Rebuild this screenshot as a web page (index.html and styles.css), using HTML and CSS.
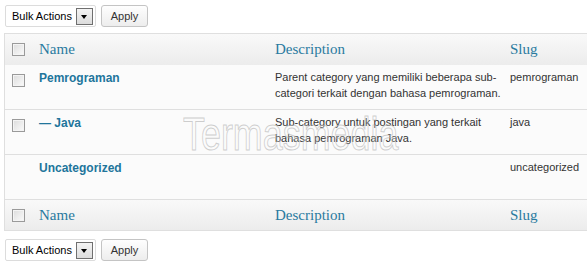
FILE: index.html
```html
<!DOCTYPE html>
<html lang="id">
<head>
  <meta charset="UTF-8" />
  <title>Categories</title>
  <link rel="stylesheet" href="styles.css">
</head>
<body>
  <div class="wrap">

    <div class="tablenav">
      <div class="bulk-select">
        <span>Bulk Actions</span>
        <span class="drop"></span>
      </div>
      <button class="button">Apply</button>
    </div>

    <table class="widefat">
      <colgroup>
        <col class="c-check">
        <col class="c-name">
        <col class="c-desc">
        <col class="c-slug">
      </colgroup>
      <thead>
        <tr>
          <th class="check-column"><span class="cb"></span></th>
          <th>Name</th>
          <th>Description</th>
          <th>Slug</th>
        </tr>
      </thead>
      <tbody>
        <tr>
          <th class="check-column"><span class="cb"></span></th>
          <td>
            <a class="row-title" href="#">Pemrograman</a>
            <div class="row-actions">Edit | Quick Edit | Delete | View</div>
          </td>
          <td class="col-desc">Parent category yang memiliki beberapa sub-categori terkait dengan bahasa pemrograman.</td>
          <td>pemrograman</td>
        </tr>
        <tr>
          <th class="check-column"><span class="cb"></span></th>
          <td>
            <a class="row-title" href="#">— Java</a>
            <div class="row-actions">Edit | Quick Edit | Delete | View</div>
          </td>
          <td class="col-desc">Sub-category untuk postingan yang terkait bahasa pemrograman Java.</td>
          <td>java</td>
        </tr>
        <tr>
          <th class="check-column"></th>
          <td>
            <a class="row-title" href="#">Uncategorized</a>
            <div class="row-actions">Edit | Quick Edit | View</div>
          </td>
          <td class="col-desc"></td>
          <td>uncategorized</td>
        </tr>
      </tbody>
      <tfoot>
        <tr>
          <th class="check-column"><span class="cb"></span></th>
          <th>Name</th>
          <th>Description</th>
          <th>Slug</th>
        </tr>
      </tfoot>
    </table>

    <div class="tablenav bottom">
      <div class="bulk-select">
        <span>Bulk Actions</span>
        <span class="drop"></span>
      </div>
      <button class="button">Apply</button>
    </div>

    <div class="watermark">Termasmedia</div>
  </div>
</body>
</html>
```

FILE: styles.css
```css
body {
  margin: 0;
  background: #fff;
  font-family: "Liberation Sans", Arial, sans-serif;
  font-size: 11px;
  color: #333;
  overflow: hidden;
}

.wrap {
  position: relative;
  padding: 5px 0 0 4px;
}

/* barra de ações */
.tablenav {
  display: flex;
  gap: 5px;
  margin-left: 1px;
  height: 22px;
  margin-bottom: 6px;
}

.tablenav.bottom {
  margin-top: 8px;
  margin-bottom: 0;
}

.bulk-select {
  display: flex;
  align-items: center;
  justify-content: space-between;
  box-sizing: border-box;
  width: 91px;
  height: 22px;
  padding: 0 2px 0 6px;
  border: 1px solid #dcdcdc;
  border-radius: 2px;
  background: #fff;
  font-size: 11px;
  color: #000;
  white-space: nowrap;
}

.bulk-select .drop {
  position: relative;
  flex: 0 0 auto;
  box-sizing: border-box;
  width: 17px;
  height: 17px;
  border: 1px solid #6f6f6f;
  background: linear-gradient(#f4f4f4, #dcdcdc);
}

.bulk-select .drop::after {
  content: "";
  position: absolute;
  left: 4px;
  top: 6px;
  border-left: 3.5px solid transparent;
  border-right: 3.5px solid transparent;
  border-top: 4px solid #000;
}

.button {
  box-sizing: border-box;
  width: 47px;
  height: 22px;
  padding: 0;
  border: 1px solid #c4c4c4;
  border-radius: 3px;
  background: linear-gradient(#fefefe, #ededed);
  font-family: "Liberation Sans", Arial, sans-serif;
  font-size: 11px;
  color: #333;
}

/* tabela */
.widefat {
  width: 660px;
  table-layout: fixed;
  border: 1px solid #dfdfdf;
  border-spacing: 0;
  background: #fbfbfb;
}

.c-check { width: 27px; }
.c-name { width: 236px; }
.c-desc { width: 235px; }

.widefat th,
.widefat td {
  text-align: left;
  vertical-align: top;
  padding: 4px 7px;
  line-height: 16px;
}

.widefat td.col-desc {
  padding-right: 2px;
}

.widefat thead th,
.widefat tfoot th {
  height: 31px;
  box-sizing: border-box;
  padding: 6px 7px 0;
  background: linear-gradient(#f9f9f9, #ececec);
  font-family: "Liberation Serif", "Times New Roman", serif;
  font-size: 15px;
  font-weight: normal;
  color: #2a7aa0;
  line-height: 18px;
}

.widefat tfoot th {
  border-top: 1px solid #dfdfdf;
}

.widefat tbody td,
.widefat tbody th {
  border-top: 1px solid #dfdfdf;
}

.widefat tbody tr:first-child td,
.widefat tbody tr:first-child th {
  border-top: none;
}

.widefat .check-column {
  padding: 9px 7px 0 7px;
}

.cb {
  display: block;
  box-sizing: border-box;
  width: 13px;
  height: 13px;
  border: 1px solid #9a9a9a;
  background: linear-gradient(135deg, #dcdcdc, #fbfbfb);
  box-shadow: inset 0 0 0 1px #f4f4f4;
}

.row-title {
  display: block;
  font-size: 12px;
  font-weight: bold;
  color: #21759b;
  text-decoration: none;
  line-height: 16px;
  margin-top: 1px;
}

.row-actions {
  visibility: hidden;
  padding-top: 2px;
  line-height: 17px;
}

/* marca d'água da captura */
.watermark {
  position: absolute;
  left: 183px;
  top: 111px;
  font-family: "Liberation Sans", Arial, sans-serif;
  font-size: 46px;
  line-height: 1;
  color: rgba(255, 255, 255, 0.2);
  -webkit-text-stroke: 1px rgba(175, 175, 175, 0.6);
  transform: scaleX(0.78);
  transform-origin: left top;
  pointer-events: none;
}
```
